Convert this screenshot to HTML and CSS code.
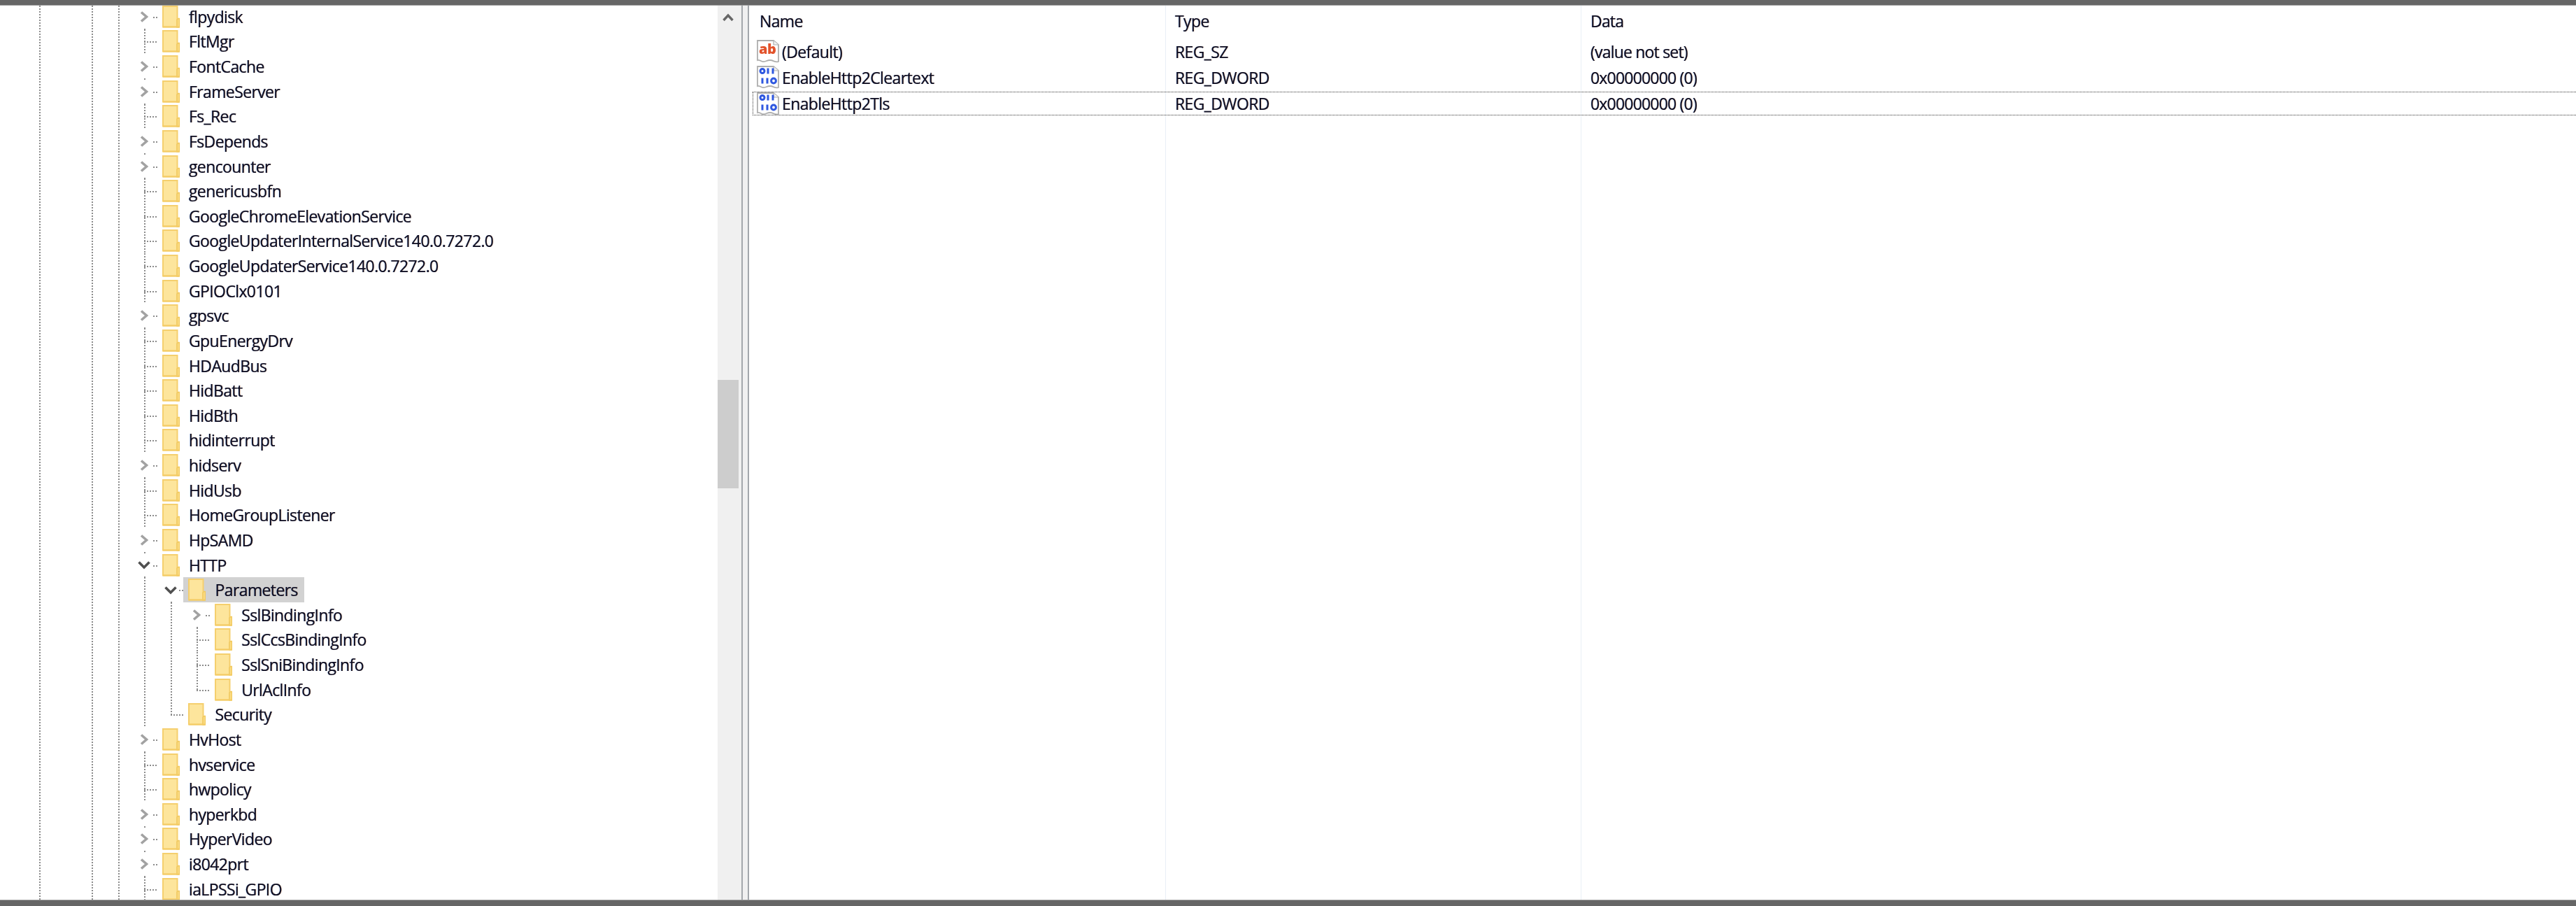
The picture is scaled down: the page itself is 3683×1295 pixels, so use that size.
FILE: index.html
```html
<!DOCTYPE html>
<html lang="en">
<head>
<meta charset="utf-8">
<title>Registry Editor</title>
<link rel="stylesheet" href="styles.css">
</head>
<body>
<svg class="defs" width="0" height="0" aria-hidden="true">
  <symbol id="folder" viewBox="0 0 25 32">
    <path d="M1 1H21.500V30.500H1Z" fill="#fde59c" stroke="#f5cf6e" stroke-width="2"/>
    <path d="M21 20L23 18.500H24.500V31H21Z" fill="#fbdc85" stroke="#f1c95f" stroke-width="1.500"/>
    <path d="M1 30.500H24" stroke="#f4cc66" stroke-width="2"/>
  </symbol>
  <symbol id="chev-r" viewBox="0 0 12 16"><path d="M2 1.500L9.500 8L2 14.500" fill="none" stroke="#a2a2a2" stroke-width="3.600"/></symbol>
  <symbol id="chev-d" viewBox="0 0 18 13"><path d="M1.500 2.500L9 10L16.500 2.500" fill="none" stroke="#505050" stroke-width="3.600"/></symbol>
  <symbol id="page" viewBox="0 0 32 33">
    <path d="M1 1H24L31 7V31C26 33 24 29 19 29C14 29 12 32 8 31C5 30 3 28 1 29Z" fill="#fff" stroke="#aeaeae" stroke-width="1.800"/>
    <path d="M24 1V7H31" fill="#f1f1f1" stroke="#aeaeae" stroke-width="1.200"/>
  </symbol>
  <symbol id="bin" viewBox="0 0 32 33">
    <use href="#page" width="32" height="33"/>
    <g fill="none" stroke="#2f58e0" stroke-width="3">
      <circle cx="8" cy="7.500" r="3"/><path d="M16 3.500V11.500M23 3.500V11.500"/>
      <path d="M8 17.500V25.500M15 17.500V25.500"/><circle cx="24" cy="21.500" r="3.400"/>
    </g>
  </symbol>
</svg>
<div class="app">
  <div class="bar top"></div>
  <div class="main">
    <div class="tree">
      <div class="rows">
        <div class="row"><span class="slot exp"><svg class="cr"><use href="#chev-r"/></svg></span><svg class="fd"><use href="#folder"/></svg><span class="lbl">flpydisk</span></div>
        <div class="row"><span class="slot leaf"></span><svg class="fd"><use href="#folder"/></svg><span class="lbl">FltMgr</span></div>
        <div class="row"><span class="slot exp"><svg class="cr"><use href="#chev-r"/></svg></span><svg class="fd"><use href="#folder"/></svg><span class="lbl">FontCache</span></div>
        <div class="row"><span class="slot exp"><svg class="cr"><use href="#chev-r"/></svg></span><svg class="fd"><use href="#folder"/></svg><span class="lbl">FrameServer</span></div>
        <div class="row"><span class="slot leaf"></span><svg class="fd"><use href="#folder"/></svg><span class="lbl">Fs_Rec</span></div>
        <div class="row"><span class="slot exp"><svg class="cr"><use href="#chev-r"/></svg></span><svg class="fd"><use href="#folder"/></svg><span class="lbl">FsDepends</span></div>
        <div class="row"><span class="slot exp"><svg class="cr"><use href="#chev-r"/></svg></span><svg class="fd"><use href="#folder"/></svg><span class="lbl">gencounter</span></div>
        <div class="row"><span class="slot leaf"></span><svg class="fd"><use href="#folder"/></svg><span class="lbl">genericusbfn</span></div>
        <div class="row"><span class="slot leaf"></span><svg class="fd"><use href="#folder"/></svg><span class="lbl">GoogleChromeElevationService</span></div>
        <div class="row"><span class="slot leaf"></span><svg class="fd"><use href="#folder"/></svg><span class="lbl">GoogleUpdaterInternalService140.0.7272.0</span></div>
        <div class="row"><span class="slot leaf"></span><svg class="fd"><use href="#folder"/></svg><span class="lbl">GoogleUpdaterService140.0.7272.0</span></div>
        <div class="row"><span class="slot leaf"></span><svg class="fd"><use href="#folder"/></svg><span class="lbl">GPIOClx0101</span></div>
        <div class="row"><span class="slot exp"><svg class="cr"><use href="#chev-r"/></svg></span><svg class="fd"><use href="#folder"/></svg><span class="lbl">gpsvc</span></div>
        <div class="row"><span class="slot leaf"></span><svg class="fd"><use href="#folder"/></svg><span class="lbl">GpuEnergyDrv</span></div>
        <div class="row"><span class="slot leaf"></span><svg class="fd"><use href="#folder"/></svg><span class="lbl">HDAudBus</span></div>
        <div class="row"><span class="slot leaf"></span><svg class="fd"><use href="#folder"/></svg><span class="lbl">HidBatt</span></div>
        <div class="row"><span class="slot leaf"></span><svg class="fd"><use href="#folder"/></svg><span class="lbl">HidBth</span></div>
        <div class="row"><span class="slot leaf"></span><svg class="fd"><use href="#folder"/></svg><span class="lbl">hidinterrupt</span></div>
        <div class="row"><span class="slot exp"><svg class="cr"><use href="#chev-r"/></svg></span><svg class="fd"><use href="#folder"/></svg><span class="lbl">hidserv</span></div>
        <div class="row"><span class="slot leaf"></span><svg class="fd"><use href="#folder"/></svg><span class="lbl">HidUsb</span></div>
        <div class="row"><span class="slot leaf"></span><svg class="fd"><use href="#folder"/></svg><span class="lbl">HomeGroupListener</span></div>
        <div class="row"><span class="slot exp"><svg class="cr"><use href="#chev-r"/></svg></span><svg class="fd"><use href="#folder"/></svg><span class="lbl">HpSAMD</span></div>
        <div class="row"><span class="slot exp"><svg class="cd"><use href="#chev-d"/></svg></span><svg class="fd"><use href="#folder"/></svg><span class="lbl">HTTP</span></div>
        <div class="row"><span class="ind line"></span><span class="slot exp"><svg class="cd"><use href="#chev-d"/></svg></span><span class="sel"><svg class="fd"><use href="#folder"/></svg><span class="lbl">Parameters</span></span></div>
        <div class="row"><span class="ind line"></span><span class="ind line"></span><span class="slot exp"><svg class="cr"><use href="#chev-r"/></svg></span><svg class="fd"><use href="#folder"/></svg><span class="lbl">SslBindingInfo</span></div>
        <div class="row"><span class="ind line"></span><span class="ind line"></span><span class="slot leaf"></span><svg class="fd"><use href="#folder"/></svg><span class="lbl">SslCcsBindingInfo</span></div>
        <div class="row"><span class="ind line"></span><span class="ind line"></span><span class="slot leaf"></span><svg class="fd"><use href="#folder"/></svg><span class="lbl">SslSniBindingInfo</span></div>
        <div class="row"><span class="ind line"></span><span class="ind line"></span><span class="slot last"></span><svg class="fd"><use href="#folder"/></svg><span class="lbl">UrlAclInfo</span></div>
        <div class="row"><span class="ind line"></span><span class="slot last"></span><svg class="fd"><use href="#folder"/></svg><span class="lbl">Security</span></div>
        <div class="row"><span class="slot exp"><svg class="cr"><use href="#chev-r"/></svg></span><svg class="fd"><use href="#folder"/></svg><span class="lbl">HvHost</span></div>
        <div class="row"><span class="slot leaf"></span><svg class="fd"><use href="#folder"/></svg><span class="lbl">hvservice</span></div>
        <div class="row"><span class="slot leaf"></span><svg class="fd"><use href="#folder"/></svg><span class="lbl">hwpolicy</span></div>
        <div class="row"><span class="slot exp"><svg class="cr"><use href="#chev-r"/></svg></span><svg class="fd"><use href="#folder"/></svg><span class="lbl">hyperkbd</span></div>
        <div class="row"><span class="slot exp"><svg class="cr"><use href="#chev-r"/></svg></span><svg class="fd"><use href="#folder"/></svg><span class="lbl">HyperVideo</span></div>
        <div class="row"><span class="slot exp"><svg class="cr"><use href="#chev-r"/></svg></span><svg class="fd"><use href="#folder"/></svg><span class="lbl">i8042prt</span></div>
        <div class="row"><span class="slot leaf"></span><svg class="fd"><use href="#folder"/></svg><span class="lbl">iaLPSSi_GPIO</span></div>
      </div>
    </div>
    <div class="scroll">
      <svg class="up" viewBox="0 0 16 12"><path d="M1.500 10L8 3L14.500 10" fill="none" stroke="#666" stroke-width="3.400"/></svg>
      <div class="thumb"></div>
    </div>
    <div class="split"></div>
    <div class="values">
      <div class="vrow head"><span class="c name">Name</span><span class="c type">Type</span><span class="c data">Data</span></div>
      <div class="vrow"><span class="c name"><svg class="ic" viewBox="0 0 32 33"><use href="#page" width="32" height="33"/><text class="ab" x="3" y="20">ab</text></svg>(Default)</span><span class="c type">REG_SZ</span><span class="c data">(value not set)</span></div>
      <div class="vrow"><span class="c name"><svg class="ic"><use href="#bin"/></svg>EnableHttp2Cleartext</span><span class="c type">REG_DWORD</span><span class="c data">0x00000000 (0)</span></div>
      <div class="vrow focus"><span class="c name"><svg class="ic"><use href="#bin"/></svg>EnableHttp2Tls</span><span class="c type">REG_DWORD</span><span class="c data">0x00000000 (0)</span></div>
    </div>
  </div>
  <div class="bar bottom"></div>
</div>
</body>
</html>
```
FILE: styles.css
```css
* { box-sizing: border-box; }
html, body { margin: 0; height: 100%; background: #fff; overflow: hidden; }
.defs { position: absolute; }
.app {
  display: flex; flex-direction: column; height: 1295px;
  font-family: "Open Sans", "Noto Sans", sans-serif;
  font-size: 23px; letter-spacing: -0.62px; color: #0c0c20;
  -webkit-text-stroke: .2px #0c0c20;
  text-shadow: .7px 0 rgba(230,120,30,.28), -.7px 0 rgba(30,120,240,.28);
}
.bar { flex: none; background: #666; }
.top { height: 8px; border-bottom: 1px solid #999; }
.bottom { height: 9px; border-top: 1px solid #999; }
.main { flex: 1; display: flex; min-height: 0; filter: blur(.55px); }

.tree {
  width: 1026px; flex: none; overflow: hidden; padding-left: 188px;
  background:
    linear-gradient(#8c8c8c 50%, transparent 50%) 56px 0 / 2px 4px repeat-y,
    linear-gradient(#8c8c8c 50%, transparent 50%) 131px 0 / 2px 4px repeat-y,
    linear-gradient(#8c8c8c 50%, transparent 50%) 169px 0 / 2px 4px repeat-y;
}
.rows { margin-top: -2px; }
.row { display: flex; align-items: center; height: 35.63px; white-space: nowrap; }
.ind, .slot { flex: none; width: 37.6px; height: 100%; position: relative; display: flex; align-items: center; justify-content: center; }
.line::before, .leaf::before, .last::before {
  content: ""; position: absolute; left: 18px; top: 0; bottom: 0; width: 2px;
  background: linear-gradient(#8c8c8c 50%, transparent 50%) 0 0 / 2px 4px repeat-y;
}
.last::before { bottom: 50%; }
.leaf::after, .last::after {
  content: ""; position: absolute; left: 18px; right: 0; top: 50%; height: 2px;
  background: linear-gradient(90deg, #8c8c8c 50%, transparent 50%) 0 0 / 4px 2px repeat-x;
}
.exp::before {
  content: ""; position: absolute; right: 1px; top: 50%; width: 6px; height: 2px;
  background: linear-gradient(90deg, #8c8c8c 50%, transparent 50%) 0 0 / 4px 2px repeat-x;
}
.exp::after {
  content: ""; position: absolute; left: 18px; bottom: -1px; width: 2px; height: 2px; background: #8c8c8c;
}
.cr { width: 12px; height: 16px; margin-right: 1px; }
.cd { width: 18px; height: 13px; margin-right: 1px; }
.fd { width: 25px; height: 32px; margin-left: 6px; flex: none; }
.lbl { margin-left: 13.400px; }
.sel { display: flex; align-items: center; height: 100%; background: #d2d2d2; padding-right: 9px; margin-left: -1px; padding-left: 1px; }

.scroll { width: 34px; flex: none; background: #f0f0f0; display: flex; flex-direction: column; align-items: flex-start; }
.up { width: 16px; height: 12px; margin: 11px 0 0 7px; }
.thumb { width: 30px; height: 155px; margin-top: 512px; background: #cdcdcd; }
.split { width: 11px; flex: none; background: #f0f0f0; border-left: 2px solid #a3a7ab; border-right: 2px solid #a3a7ab; }

.values { flex: 1; min-width: 0; display: flex; flex-direction: column; position: relative;
  background:
    linear-gradient(#e9eff6, #e9eff6) 595px 0 / 1px 100% no-repeat,
    linear-gradient(#e9eff6, #e9eff6) 1189px 0 / 1px 100% no-repeat;
}
.vrow { display: flex; align-items: center; height: 37px; border: 1px solid transparent; flex: none; }
.head { height: 47px; padding-bottom: 3px; }
.c { display: flex; align-items: center; padding-left: 14px; }
.name { width: 594px; padding-left: 10px; }
.type { width: 594px; }
.head .name { padding-left: 14px; }
.data { flex: 1; letter-spacing: -0.8px; }
.ic { width: 32px; height: 33px; margin-right: 4px; flex: none; }
.ab { font-family: "Open Sans", sans-serif; font-weight: 800; font-size: 20px; letter-spacing: -0.5px; fill: #e2532c; stroke: none; -webkit-text-stroke: 0; text-shadow: none; }
.focus { height: 34px; margin-top: 2px; border: 1.500px dotted #333; border-right: 0; margin-left: 5px; }
.focus .name { width: 589px; padding-left: 5px; }
```
